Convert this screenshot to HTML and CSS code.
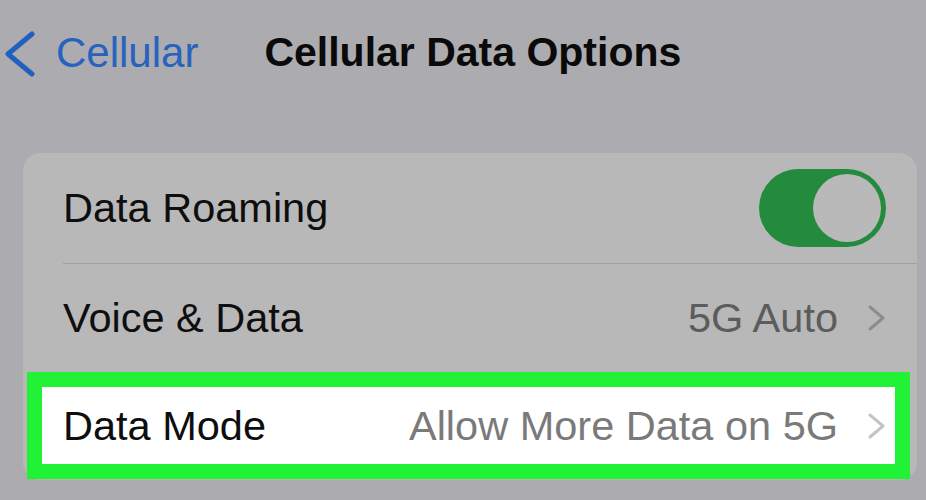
FILE: index.html
```html
<!DOCTYPE html>
<html lang="en">
<head>
<meta charset="utf-8">
<title>Cellular Data Options</title>
<link rel="stylesheet" href="styles.css">
</head>
<body>
  <header class="nav">
    <div class="back">
      <svg class="back-icon" width="30" height="48" viewBox="0 0 30 48" aria-hidden="true">
        <polyline points="27,5 3,25 27,45" fill="none" stroke="#2260C0" stroke-width="5" stroke-linecap="round" stroke-linejoin="round"/>
      </svg>
      <span class="back-label">Cellular</span>
    </div>
    <h1 class="title">Cellular Data Options</h1>
  </header>

  <section class="card">
    <div class="row row-first">
      <span class="label">Data Roaming</span>
      <div class="toggle"><div class="knob"></div></div>
    </div>
    <div class="divider"></div>
    <div class="row row-second">
      <span class="label">Voice &amp; Data</span>
      <span class="value">5G Auto
        <svg class="chev" width="17" height="26" viewBox="0 0 17 26" aria-hidden="true">
          <polyline points="2,2 15,13 2,24" fill="none" stroke="#8C8C8C" stroke-width="3" stroke-linecap="round" stroke-linejoin="round"/>
        </svg>
      </span>
    </div>
    <div class="highlight">
      <div class="row row-hl">
        <span class="label">Data Mode</span>
        <span class="value value-light">Allow More Data on 5G
          <svg class="chev" width="17" height="26" viewBox="0 0 17 26" aria-hidden="true">
            <polyline points="2,2 15,13 2,24" fill="none" stroke="#C4C4C4" stroke-width="3" stroke-linecap="round" stroke-linejoin="round"/>
          </svg>
        </span>
      </div>
    </div>
  </section>
</body>
</html>
```
FILE: styles.css
```css
html, body {
  margin: 0;
  padding: 0;
}

body {
  width: 926px;
  height: 500px;
  overflow: hidden;
  background: #acabaf;
  font-family: "Liberation Sans", Arial, sans-serif;
  font-size: 41.5px;
  color: #0e0e0e;
}

.nav {
  display: flex;
  align-items: center;
  height: 105px;
  padding-left: 5px;
}

.back {
  display: flex;
  align-items: center;
  color: #2762be;
}

.back-icon {
  display: block;
  flex: none;
}

.back-label {
  margin-left: 21px;
  font-size: 42px;
  line-height: 1;
}

.title {
  margin: 0 0 0 66px;
  font-size: 41px;
  font-weight: bold;
  line-height: 1;
  color: #0a0a0a;
}

.card {
  margin: 48px 9px 0 23px;
  background: #b8b8b8;
  border-radius: 18px;
  padding-bottom: 1px;
}

.row {
  display: flex;
  align-items: center;
  justify-content: space-between;
  padding: 0 31px 0 40px;
  line-height: 1;
}

.row-first {
  height: 110px;
}

.row-second {
  height: 108px;
  padding-right: 32px;
}

.divider {
  height: 1px;
  margin-left: 40px;
  background: #a2a2a2;
}

.label {
  white-space: nowrap;
}

.value {
  display: flex;
  align-items: center;
  gap: 30px;
  color: #5c5c5c;
  white-space: nowrap;
}

.value-light {
  color: #7a7a7a;
}

.chev {
  display: block;
  flex: none;
}

.toggle {
  display: flex;
  align-items: center;
  justify-content: flex-end;
  width: 127px;
  height: 78px;
  border-radius: 39px;
  background: #248a3e;
}

.knob {
  width: 68px;
  height: 68px;
  margin-right: 5px;
  border-radius: 50%;
  background: #b9b9b9;
}

.highlight {
  margin: 0 7px 0 4px;
  border: 15px solid #22f236;
  background: #ffffff;
}

.row-hl {
  height: 77px;
  padding: 0 10px 0 21px;
}
```
